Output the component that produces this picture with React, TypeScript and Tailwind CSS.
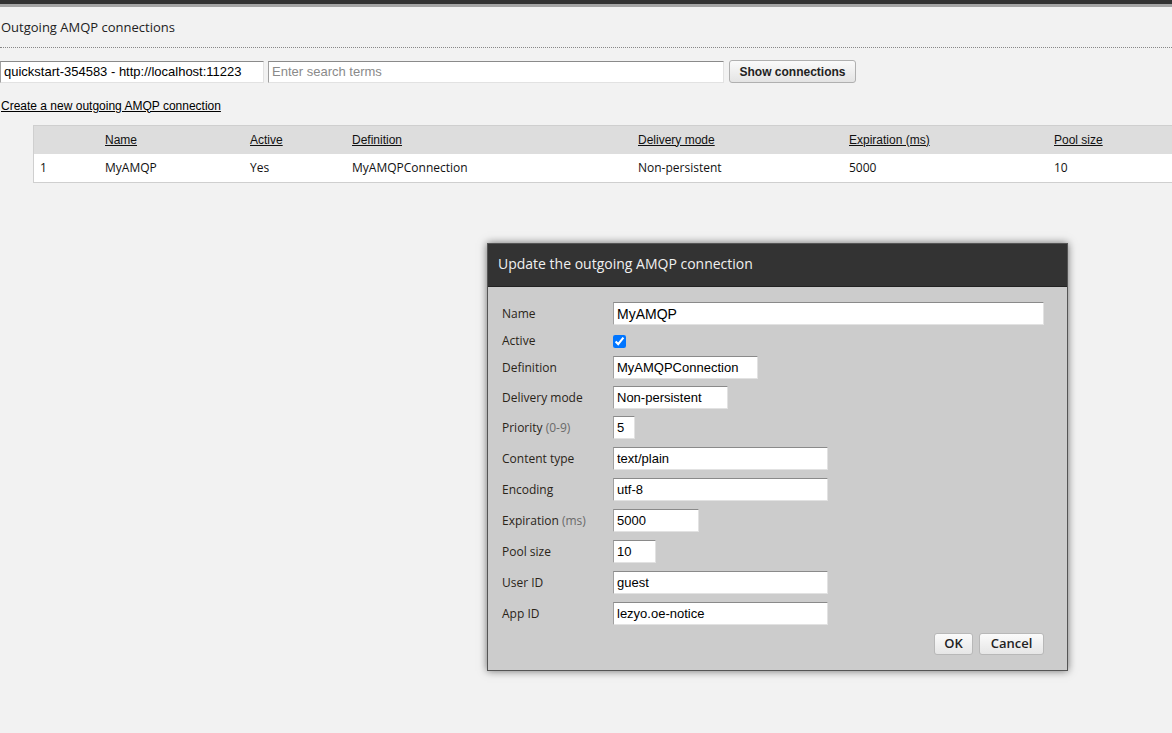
import React from "react";

const seg = { fontFamily: '"Open Sans", "Noto Sans", sans-serif' };
const arial = { fontFamily: '"Liberation Sans", Arial, sans-serif' };

const inputCls =
  "h-full bg-white border border-t-[#8a8a8a] border-l-[#a0a0a0] border-b-[#e2e2e2] border-r-[#e2e2e2] px-[3px] text-[13px] text-black outline-none";

function Row({
  label,
  sub,
  h = "h-[23px]",
  mt = "mt-[8px]",
  children,
}: {
  label: string;
  sub?: string;
  h?: string;
  mt?: string;
  children: React.ReactNode;
}) {
  return (
    <div className={`flex items-center ${h} ${mt}`}>
      <div className="w-[111px] text-[12px] text-[#2a2418]" style={seg}>
        {label}
        {sub && <span className="text-[#6a6a6a]"> {sub}</span>}
      </div>
      <div className="h-full flex items-center">{children}</div>
    </div>
  );
}

function Field({ value, w }: { value: string; w: string }) {
  return (
    <input
      readOnly
      value={value}
      className={`${inputCls} ${w}`}
      style={arial}
    />
  );
}

export default function App() {
  const cols = ["w-[71px]", "w-[145px]", "w-[102px]", "w-[286px]", "w-[211px]", "w-[205px]", "w-[160px]"];
  const heads = ["", "Name", "Active", "Definition", "Delivery mode", "Expiration (ms)", "Pool size"];
  const vals = ["1", "MyAMQP", "Yes", "MyAMQPConnection", "Non-persistent", "5000", "10"];
  return (
    <div className="relative w-[1172px] h-[733px] bg-[#f2f2f2] overflow-hidden">
      <div className="h-[4px] bg-[#333333]" />
      <div className="h-[3px] bg-[#a5a5a5]" />
      <div className="pt-[11px] pl-[1px] pb-[9px] text-[13px] text-[#222]" style={seg}>
        Outgoing AMQP connections
      </div>
      <div className="border-b border-dotted border-[#888]" />
      <div className="flex items-center mt-[13px] h-[22px]">
        <input
          readOnly
          value="quickstart-354583 - http://localhost:11223"
          className={`${inputCls} w-[264px] px-[3px]`}
          style={arial}
        />
        <input
          readOnly
          placeholder="Enter search terms"
          className={`${inputCls} w-[456px] ml-[4px] placeholder:text-[#8a8a8a]`}
          style={arial}
        />
        <button
          className="ml-[5px] h-[23px] w-[127px] rounded-[3px] border border-[#b0b0b0] bg-gradient-to-b from-[#fafafa] to-[#e4e4e4] text-[12px] font-bold text-[#222]"
          style={arial}
        >
          Show connections
        </button>
      </div>
      <div className="mt-[14px] pl-[1px] text-[12px] text-black underline" style={arial}>
        Create a new outgoing AMQP connection
      </div>
      <div className="ml-[33px] mt-[10px] w-[1200px] border border-[#cfcfcf]">
        <div className="flex h-[28px] items-center bg-[#dddddd] text-[12px] text-[#111]" style={arial}>
          {heads.map((h, i) => (
            <div key={i} className={`${cols[i]} ${i === 0 ? "pl-[6px]" : ""}`}>
              {h && <span className="underline">{h}</span>}
            </div>
          ))}
        </div>
        <div className="flex h-[28px] items-center pt-[1px] bg-white text-[12px] text-[#111]" style={seg}>
          {vals.map((v, i) => (
            <div key={i} className={`${cols[i]} ${i === 0 ? "pl-[6px]" : ""}`}>
              {v}
            </div>
          ))}
        </div>
      </div>

      <div className="absolute left-[487px] top-[243px] w-[581px] h-[428px] border border-[#555] shadow-[0_0_8px_rgba(0,0,0,0.55)] bg-[#cccccc] flex flex-col">
        <div
          className="h-[43px] bg-[#333333] border-b border-[#222] flex items-center pl-[10px] pb-[3px] text-[14px] text-[#f0f0f0]"
          style={seg}
        >
          Update the outgoing AMQP connection
        </div>
        <div className="pl-[14px] pr-[23px] pt-[15px]">
          <Row label="Name" h="h-[23px]" mt="mt-0">
            <input
              readOnly
              value="MyAMQP"
              className={`${inputCls} w-[431px] text-[14px]`}
              style={arial}
            />
          </Row>
          <Row label="Active" h="h-[24px]" mt="mt-[4px]">
            <input type="checkbox" defaultChecked className="m-0 w-[13px] h-[13px] accent-[#0075ff]" />
          </Row>
          <Row label="Definition" h="h-[23px]" mt="mt-[3px]">
            <Field value="MyAMQPConnection" w="w-[145px]" />
          </Row>
          <Row label="Delivery mode" mt="mt-[7px]">
            <Field value="Non-persistent" w="w-[115px]" />
          </Row>
          <Row label="Priority" sub="(0-9)" mt="mt-[7px]">
            <Field value="5" w="w-[22px]" />
          </Row>
          <Row label="Content type">
            <Field value="text/plain" w="w-[215px]" />
          </Row>
          <Row label="Encoding">
            <Field value="utf-8" w="w-[215px]" />
          </Row>
          <Row label="Expiration" sub="(ms)">
            <Field value="5000" w="w-[86px]" />
          </Row>
          <Row label="Pool size">
            <Field value="10" w="w-[43px]" />
          </Row>
          <Row label="User ID">
            <Field value="guest" w="w-[215px]" />
          </Row>
          <Row label="App ID">
            <Field value="lezyo.oe-notice" w="w-[215px]" />
          </Row>
          <div className="flex justify-end gap-[6px] mt-[8px] h-[22px]">
            <button
              className="w-[39px] h-[22px] rounded-[3px] border border-[#b8b8b8] bg-gradient-to-b from-[#fbfbfb] to-[#e6e6e6] text-[13px] font-semibold text-[#222]"
              style={seg}
            >
              OK
            </button>
            <button
              className="w-[65px] h-[22px] rounded-[3px] border border-[#b8b8b8] bg-gradient-to-b from-[#fbfbfb] to-[#e6e6e6] text-[13px] font-semibold text-[#222]"
              style={seg}
            >
              Cancel
            </button>
          </div>
        </div>
      </div>
    </div>
  );
}
